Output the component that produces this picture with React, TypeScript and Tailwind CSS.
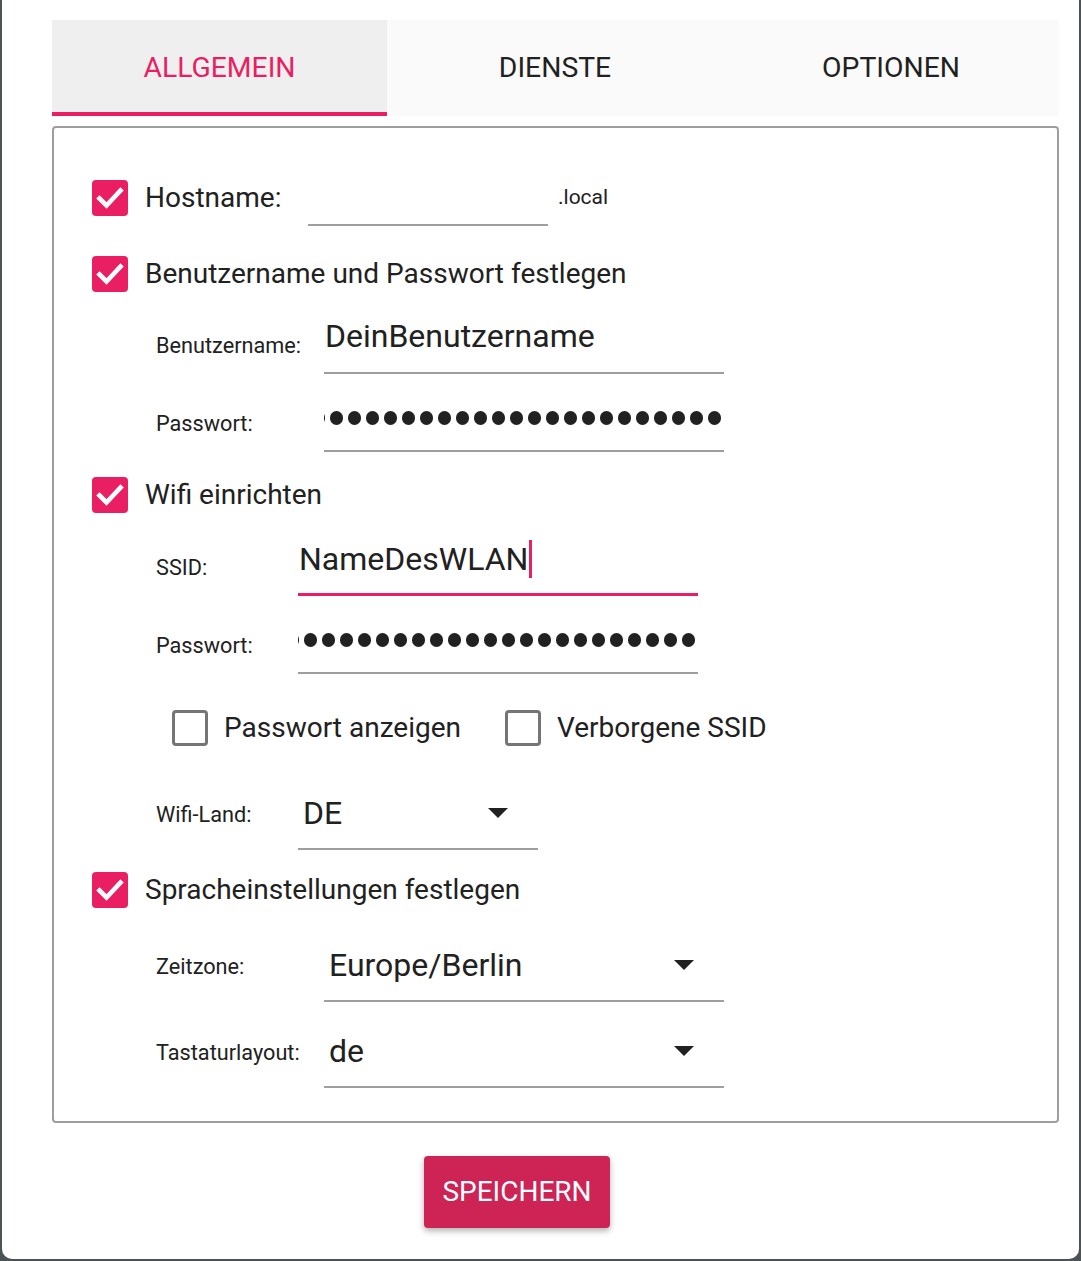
import React from "react";

const font = { fontFamily: "Roboto, 'Noto Sans', sans-serif" };

function CheckedBox() {
  return (
    <div className="w-[36px] h-[36px] rounded-[4px] bg-[#e91e63] flex items-center justify-center shrink-0">
      <svg width="36" height="36" viewBox="0 0 36 36">
        <path d="M7.5 18.5 L14.5 25.5 L28.5 10.5" fill="none" stroke="#ffffff" strokeWidth="4.6" strokeLinecap="square" strokeLinejoin="miter" />
      </svg>
    </div>
  );
}

function EmptyBox() {
  return <div className="w-[36px] h-[36px] rounded-[4px] border-[3px] border-[#757575] shrink-0" />;
}

function Dots() {
  const dots = Array.from({ length: 24 });
  return (
    <div className="overflow-hidden w-full flex justify-end pr-[3px]">
      {dots.map((_, i) => (
        <div key={i} className="w-[13px] h-[14px] rounded-full bg-[#212121] shrink-0 ml-[5px]" />
      ))}
    </div>
  );
}

function Arrow() {
  return (
    <svg width="20" height="10" viewBox="0 0 20 10" className="shrink-0">
      <path d="M0 0 L20 0 L10 10 Z" fill="#212121" />
    </svg>
  );
}

export default function App() {
  return (
    <div className="w-[1081px] h-[1261px] bg-[#4b5357] overflow-hidden" style={font}>
      <div className="ml-[2px] w-[1077px] h-[1259px] bg-white rounded-b-[10px] pl-[50px] pr-[20px] pt-[20px] text-[#212121]">
        {/* Tabs */}
        <div className="flex h-[96px] bg-[#fafafa]">
          <div className="w-[335px] bg-[#efefef] border-b-[4px] border-[#e91e63] flex items-center justify-center text-[28.3px] text-[#e91e63] pt-[4px]">
            ALLGEMEIN
          </div>
          <div className="w-[336px] flex items-center justify-center text-[28.3px] text-[#212121]">
            DIENSTE
          </div>
          <div className="flex-1 flex items-center justify-center text-[28.3px] text-[#212121]">
            OPTIONEN
          </div>
        </div>

        {/* Panel */}
        <div className="mt-[10px] h-[997px] border-2 border-[#9e9e9e] rounded-[4px] pl-[38px] pt-[42px]">
          {/* Hostname */}
          <div className="h-[56px] flex items-center">
            <CheckedBox />
            <div className="ml-[17px] w-[163px] text-[28px]">Hostname:</div>
            <div className="w-[240px] h-[56px] border-b-2 border-[#9e9e9e]" />
            <div className="ml-[10px] text-[21px]">.local</div>
          </div>

          {/* Benutzer */}
          <div className="mt-[20px] h-[56px] flex items-center">
            <CheckedBox />
            <div className="ml-[17px] text-[28px]">Benutzername und Passwort festlegen</div>
          </div>
          <div className="mt-[12px] h-[60px] flex items-center pl-[64px]">
            <div className="w-[168px] text-[21.7px] pt-[4px]">Benutzername:</div>
            <div className="w-[400px] h-[60px] border-b-2 border-[#9e9e9e] flex items-center pb-[14px] pl-[1px] text-[32px]">
              DeinBenutzername
            </div>
          </div>
          <div className="mt-[20px] h-[58px] flex items-center pl-[64px]">
            <div className="w-[168px] text-[21.7px] pt-[2px]">Passwort:</div>
            <div className="w-[400px] h-[58px] border-b-2 border-[#9e9e9e] flex items-center pb-[8px]">
              <Dots />
            </div>
          </div>

          {/* Wifi */}
          <div className="mt-[15px] h-[56px] flex items-center">
            <CheckedBox />
            <div className="ml-[17px] text-[28px]">Wifi einrichten</div>
          </div>
          <div className="mt-[15px] h-[58px] flex items-center pl-[64px]">
            <div className="w-[142px] text-[21.7px] pt-[2px]">SSID:</div>
            <div className="w-[400px] h-[58px] border-b-[3px] border-[#e91e63] flex items-center pb-[13px] pl-[1px] text-[32px]">
              <span>NameDesWLAN</span>
              <span className="w-[3px] h-[38px] bg-[#e91e63] ml-[1px]" />
            </div>
          </div>
          <div className="mt-[20px] h-[58px] flex items-center pl-[64px]">
            <div className="w-[142px] text-[21.7px] pt-[2px]">Passwort:</div>
            <div className="w-[400px] h-[58px] border-b-2 border-[#9e9e9e] flex items-center pb-[8px]">
              <Dots />
            </div>
          </div>
          <div className="mt-[34px] h-[40px] flex items-center pl-[80px]">
            <EmptyBox />
            <div className="ml-[16px] text-[28px]">Passwort anzeigen</div>
            <div className="ml-[44px]">
              <EmptyBox />
            </div>
            <div className="ml-[16px] text-[28px]">Verborgene SSID</div>
          </div>
          <div className="mt-[32px] h-[70px] flex items-center pl-[64px]">
            <div className="w-[142px] text-[21.7px]">Wifi-Land:</div>
            <div className="w-[240px] h-[70px] border-b-2 border-[#9e9e9e] flex items-center pb-[2px] pl-[5px] pr-[30px] text-[32px]">
              <span className="flex-1">DE</span>
              <Arrow />
            </div>
          </div>

          {/* Sprache */}
          <div className="mt-[12px] h-[56px] flex items-center">
            <CheckedBox />
            <div className="ml-[17px] text-[28px]">Spracheinstellungen festlegen</div>
          </div>
          <div className="mt-[14px] h-[70px] flex items-center pl-[64px]">
            <div className="w-[168px] text-[21.7px]">Zeitzone:</div>
            <div className="w-[400px] h-[70px] border-b-2 border-[#9e9e9e] flex items-center pb-[2px] pl-[5px] pr-[30px] text-[32px]">
              <span className="flex-1">Europe/Berlin</span>
              <Arrow />
            </div>
          </div>
          <div className="mt-[16px] h-[70px] flex items-center pl-[64px]">
            <div className="w-[168px] text-[21.7px]">Tastaturlayout:</div>
            <div className="w-[400px] h-[70px] border-b-2 border-[#9e9e9e] flex items-center pb-[2px] pl-[5px] pr-[30px] text-[32px]">
              <span className="flex-1">de</span>
              <Arrow />
            </div>
          </div>
        </div>

        {/* Button */}
        <div className="mt-[33px] flex justify-center pr-[77px]">
          <div className="w-[186px] h-[72px] bg-[#cd2355] rounded-[4px] shadow-[0_3px_6px_rgba(0,0,0,0.3)] flex items-center justify-center text-white text-[28px]">
            SPEICHERN
          </div>
        </div>
      </div>
    </div>
  );
}
